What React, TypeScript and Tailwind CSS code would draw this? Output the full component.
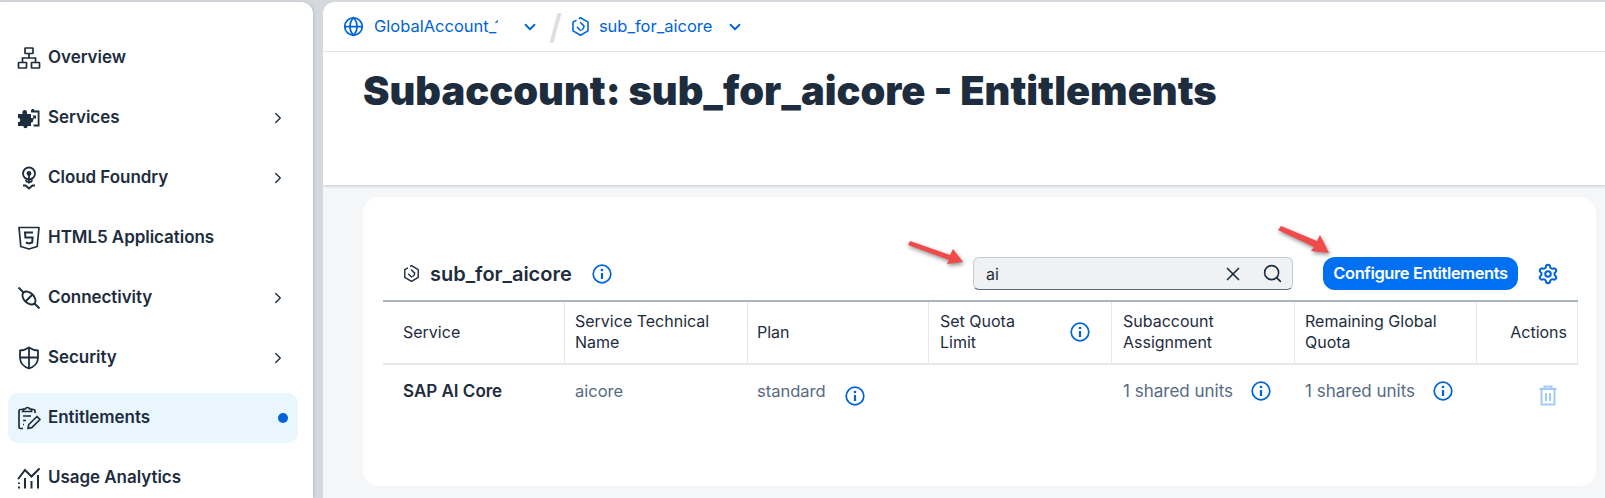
import { ChevronDown, ChevronRight, Globe, Search, Settings, X } from "lucide-react";

const fontStack = "font-['Inter','Noto_Sans',sans-serif]";

function Overview() {
  return (
    <svg viewBox="0 0 24 24" className="w-[24px] h-[24px]" fill="none" stroke="currentColor" strokeWidth="1.7">
      <rect x="8" y="2" width="8" height="5.5" rx="0.5" />
      <rect x="1.5" y="16.5" width="8" height="5.5" rx="0.5" />
      <rect x="14.5" y="16.5" width="8" height="5.5" rx="0.5" />
      <path d="M12 7.5v4.5M5.5 16.5V12h13v4.5" />
    </svg>
  );
}

function Services() {
  return (
    <svg viewBox="0 0 24 24" className="w-[24px] h-[24px]" fill="currentColor">
      <path d="M1 8h4.500c-.6-3 .8-4 2.200-4s2.800 1 2.300 4H14v4c3-.6 3 5 0 4.500V20h-3.500c.5 3-4.500 3-4 0H1v-4c3 .5 3-4.500 0-4z" />
      <path d="M14 4.500c.3-2 3.300-2 3.500 0h5v16h-6v-2h4.200V6.500H14z" />
      <path d="M15.500 9.500h3.500v3.500l-1.500-1-2 2.500-1-1 2-2.500z" />
    </svg>
  );
}

function CloudFoundry() {
  return (
    <svg viewBox="0 0 24 24" className="w-[24px] h-[24px]" fill="none" stroke="currentColor" strokeWidth="1.8">
      <circle cx="12" cy="7.500" r="6" />
      <circle cx="12" cy="7.500" r="2.400" fill="currentColor" stroke="none" />
      <path d="M12 8v9.500M8.500 14l1.500 1.800h4l1.500-1.800" />
      <path d="M6 19.500h2.500l3.500 3 3.500-3H18" strokeWidth="2" />
    </svg>
  );
}

function Html5() {
  return (
    <svg viewBox="0 0 24 24" className="w-[24px] h-[24px]" fill="none" stroke="currentColor" strokeWidth="1.7">
      <path d="M2 1.500h20l-1.800 19L12 23l-8.200-2.500z" strokeLinejoin="round" />
      <path d="M16 6.500H8l.4 5h7.200l-.4 5-3.200 1-3.200-1" strokeWidth="2" />
    </svg>
  );
}

function Connectivity() {
  return (
    <svg viewBox="0 0 24 24" className="w-[24px] h-[24px]" fill="none" stroke="currentColor" strokeWidth="1.9">
      <path d="M1.500 1.500l5 5M17.500 17.500l5 5" />
      <ellipse cx="12" cy="12" rx="7.800" ry="5" transform="rotate(45 12 12)" />
      <path d="M8.500 15.500l7-7" />
    </svg>
  );
}

function Security() {
  return (
    <svg viewBox="0 0 24 24" className="w-[24px] h-[24px]" fill="none" stroke="currentColor" strokeWidth="1.8">
      <path d="M12 1.500c3 2 6 3 9 3v7c0 5.500-4 9.500-9 11-5-1.500-9-5.500-9-11v-7c3 0 6-1 9-3z" strokeLinejoin="round" />
      <path d="M12 2v20M3 11.500h18" />
    </svg>
  );
}

function EntitlementsIcon() {
  return (
    <svg viewBox="0 0 24 24" className="w-[24px] h-[24px]" fill="none" stroke="currentColor" strokeWidth="1.7">
      <path d="M6.500 3.500H3.500c-1 0-1.500.5-1.500 1.500v16c0 1 .5 1.500 1.500 1.500h2.500M15 3.500h1.500c1 0 1.500.5 1.500 1.500v2" />
      <path d="M6.500 5V3h2c.3-2 3.700-2 4 0h2v2.500h-8.500z" />
      <path d="M6 10h8M6 14.500h3M6 18.500h1" />
      <path d="M11 22.500l.8-4L20 10.500l3 3-8.200 8.200z" strokeLinejoin="round" />
    </svg>
  );
}

function Analytics() {
  return (
    <svg viewBox="0 0 24 24" className="w-[24px] h-[24px]" fill="none" stroke="currentColor" strokeWidth="2">
      <path d="M1.500 12.500L8 4l6.500 6.500L22 3" strokeLinecap="round" />
      <path d="M2 16.500v1.500M2 20.500v2M8 12v10.500M14.500 15v7.500M21 9v13.500" />
    </svg>
  );
}

function SubaccountIcon({ className }: { className: string }) {
  return (
    <svg viewBox="0 0 24 24" className={className} fill="none" stroke="currentColor" strokeWidth="2">
      <path d="M10 2.200 12 1l9.500 5.500v11L12 23l-9.500-5.500v-11L7 4" strokeLinejoin="round" />
      <path d="M12 7l4.500 4.500c0 2-1 3.500-2.500 4.500M12 17l-4-4" strokeLinecap="round" />
    </svg>
  );
}

function Info({ className = "" }: { className?: string }) {
  return (
    <svg viewBox="0 0 20 20" className={`w-[20px] h-[20px] text-[#0064d9] shrink-0 ${className}`} fill="none" stroke="currentColor">
      <circle cx="10" cy="10" r="8.800" strokeWidth="1.700" />
      <circle cx="10" cy="6" r="1.300" fill="currentColor" stroke="none" />
      <path d="M10 9v6" strokeWidth="2.200" />
    </svg>
  );
}

function TrashIcon() {
  return (
    <svg viewBox="0 0 22 22" className="mt-[5px] w-[22px] h-[22px] text-[#a3c9f7]" fill="none" stroke="currentColor" strokeWidth="2">
      <path d="M2.500 5h17M7.500 5V2.500h7V5M4.500 5v15.500h13V5" />
      <path d="M9 9v8M13 9v8" />
    </svg>
  );
}

function RedArrow({ className, d }: { className: string; d: string }) {
  return (
    <svg viewBox="0 0 60 40" className={`absolute w-[60px] h-[40px] drop-shadow-[1px_2px_2px_rgba(0,0,0,0.45)] ${className}`} fill="#f04a4a">
      <path d={d} />
    </svg>
  );
}

const navItems = [
  { label: "Overview", icon: <Overview /> },
  { label: "Services", icon: <Services />, chevron: true },
  { label: "Cloud Foundry", icon: <CloudFoundry />, chevron: true },
  { label: "HTML5 Applications", icon: <Html5 /> },
  { label: "Connectivity", icon: <Connectivity />, chevron: true },
  { label: "Security", icon: <Security />, chevron: true },
  { label: "Entitlements", icon: <EntitlementsIcon />, active: true },
  { label: "Usage Analytics", icon: <Analytics /> },
];

const columns = [
  { title: "Service", className: "pl-[20px] w-[182px]" },
  { title: "Service Technical Name", className: "pl-[10px] w-[183px]" },
  { title: "Plan", className: "pl-[9px] w-[181px]" },
  { title: "Set Quota Limit", className: "pl-[11px] w-[183px]", info: true },
  { title: "Subaccount Assignment", className: "pl-[11px] w-[183px]" },
  { title: "Remaining Global Quota", className: "pl-[10px] w-[182px]" },
];

function Sidebar() {
  return (
    <aside className="w-[313px] shrink-0 bg-white rounded-tr-[12px] pt-[31px] px-[8px] pr-[15px] flex flex-col gap-[10px] shadow-[1px_0_3px_rgba(0,0,0,0.12)]">
      {navItems.map((item) => (
        <div
          key={item.label}
          className={`h-[50px] shrink-0 rounded-[10px] pl-[9px] pr-[10px] flex items-center gap-[7px] text-[#1d2d3e] ${item.active ? "bg-[#e9f6fe]" : ""}`}
        >
          {item.icon}
          <span className="flex-1 text-[17px] font-semibold tracking-[-0.05px]">{item.label}</span>
          {item.chevron && <ChevronRight className="w-[18px] h-[18px] mr-[1px]" strokeWidth={1.8} />}
          {item.active && <span className="w-[10px] h-[10px] rounded-full bg-[#0064d9]" />}
        </div>
      ))}
    </aside>
  );
}

function Breadcrumb() {
  return (
    <div className="h-[50px] border-b border-[#e5e5e5] pl-[20px] flex items-center text-[#0064d9] text-[16.5px]">
      <Globe className="w-[21px] h-[21px]" strokeWidth={2} />
      <span className="ml-[10px] w-[124px] overflow-hidden whitespace-nowrap">GlobalAccount_12</span>
      <ChevronDown className="ml-[23px] w-[18px] h-[18px]" strokeWidth={2.4} />
      <span className="ml-[10px] text-[#dcdfe2] text-[34px] leading-none font-semibold">/</span>
      <SubaccountIcon className="ml-[9px] w-[19px] h-[19px]" />
      <span className="ml-[9px]">sub_for_aicore</span>
      <ChevronDown className="ml-[14px] w-[18px] h-[18px]" strokeWidth={2.4} />
    </div>
  );
}

function EntitlementsCard() {
  return (
    <section className="ml-[40px] mr-[9px] mt-[12px] h-[289px] bg-white rounded-[16px] px-[20px] pr-[18px] pt-[60px]">
      <div className="h-[33px] flex items-center">
        <SubaccountIcon className="ml-[20px] w-[17px] h-[17px] text-[#1d2d3e]" />
        <span className="ml-[10px] text-[20px] font-semibold text-[#1d2d3e]">sub_for_aicore</span>
        <Info className="ml-[20px]" />
        <div className="ml-auto w-[320px] h-[33px] bg-[#eff1f2] rounded-[6px] border border-[#c5cbd1] border-b-[#556b82] flex items-center pl-[12px] pr-[9px] text-[#1d2d3e] text-[16px]">
          <span className="flex-1">ai</span>
          <X className="w-[22px] h-[22px]" strokeWidth={1.8} />
          <Search className="ml-[18px] w-[21px] h-[21px]" strokeWidth={1.8} />
        </div>
        <button className="ml-[30px] w-[195px] h-[33px] bg-[#0070f2] rounded-[12px] text-white text-[16.5px] font-semibold tracking-[-0.4px]">
          Configure Entitlements
        </button>
        <Settings className="ml-[19px] mr-[19px] w-[22px] h-[22px] text-[#0064d9]" strokeWidth={2.2} />
      </div>

      <div className="mt-[10px] h-[65px] border-t-2 border-b-2 border-t-[#a9b4be] border-b-[#e5e8eb] flex text-[16px] leading-[21px] text-[#1d2d3e]">
        {columns.map((col) => (
          <div key={col.title} className={`${col.className} pr-[21px] pb-[1px] border-r border-[#e5e8eb] flex items-center justify-between`}>
            <span className={col.info ? "w-[110px]" : ""}>{col.title}</span>
            {col.info && <Info />}
          </div>
        ))}
        <div className="flex-1 border-r border-[#e5e8eb] pr-[10px] flex items-center justify-end">Actions</div>
      </div>

      <div className="flex text-[16.5px] text-[#556b82] pt-[14px]">
        <div className="pl-[20px] w-[182px] text-[17px] font-semibold text-[#1d2d3e]">SAP AI Core</div>
        <div className="pl-[10px] w-[183px]">aicore</div>
        <div className="pl-[9px] w-[181px] flex gap-[19px]">
          <span>standard</span>
          <Info className="mt-[7px]" />
        </div>
        <div className="w-[183px]" />
        <div className="pl-[11px] w-[183px] flex gap-[18px] items-start">
          <span className="text-[17px]">1 shared units</span>
          <Info className="mt-[2px]" />
        </div>
        <div className="pl-[10px] w-[182px] flex gap-[18px] items-start">
          <span className="text-[17px]">1 shared units</span>
          <Info className="mt-[2px]" />
        </div>
        <div className="flex-1 flex justify-end pr-[19px]">
          <TrashIcon />
        </div>
      </div>
    </section>
  );
}

export default function App() {
  return (
    <div className={`relative w-[1605px] h-[498px] overflow-hidden bg-[#d5d9dd] pt-[2px] flex gap-[10px] ${fontStack}`}>
      <Sidebar />
      <main className="flex-1 min-w-0 bg-[#f5f6f7] rounded-tl-[12px] overflow-hidden">
        <header className="h-[183px] bg-white shadow-[0_1px_3px_rgba(0,0,0,0.2)]">
          <Breadcrumb />
          <h1 className="ml-[40px] mt-[15px] text-[39.8px] leading-[48px] font-black text-[#1d2d3e] whitespace-nowrap">
            Subaccount: sub_for_aicore - Entitlements
          </h1>
        </header>
        <EntitlementsCard />
      </main>
      <RedArrow className="left-[905px] top-[236px]" d="M3 9 5 5 45 19 48 13 58 26 42 28 44 24z" />
      <RedArrow className="left-[1275px] top-[221px]" d="M3 9 6 5 42 20 45 14 54 32 36 30 39 26z" />
    </div>
  );
}
